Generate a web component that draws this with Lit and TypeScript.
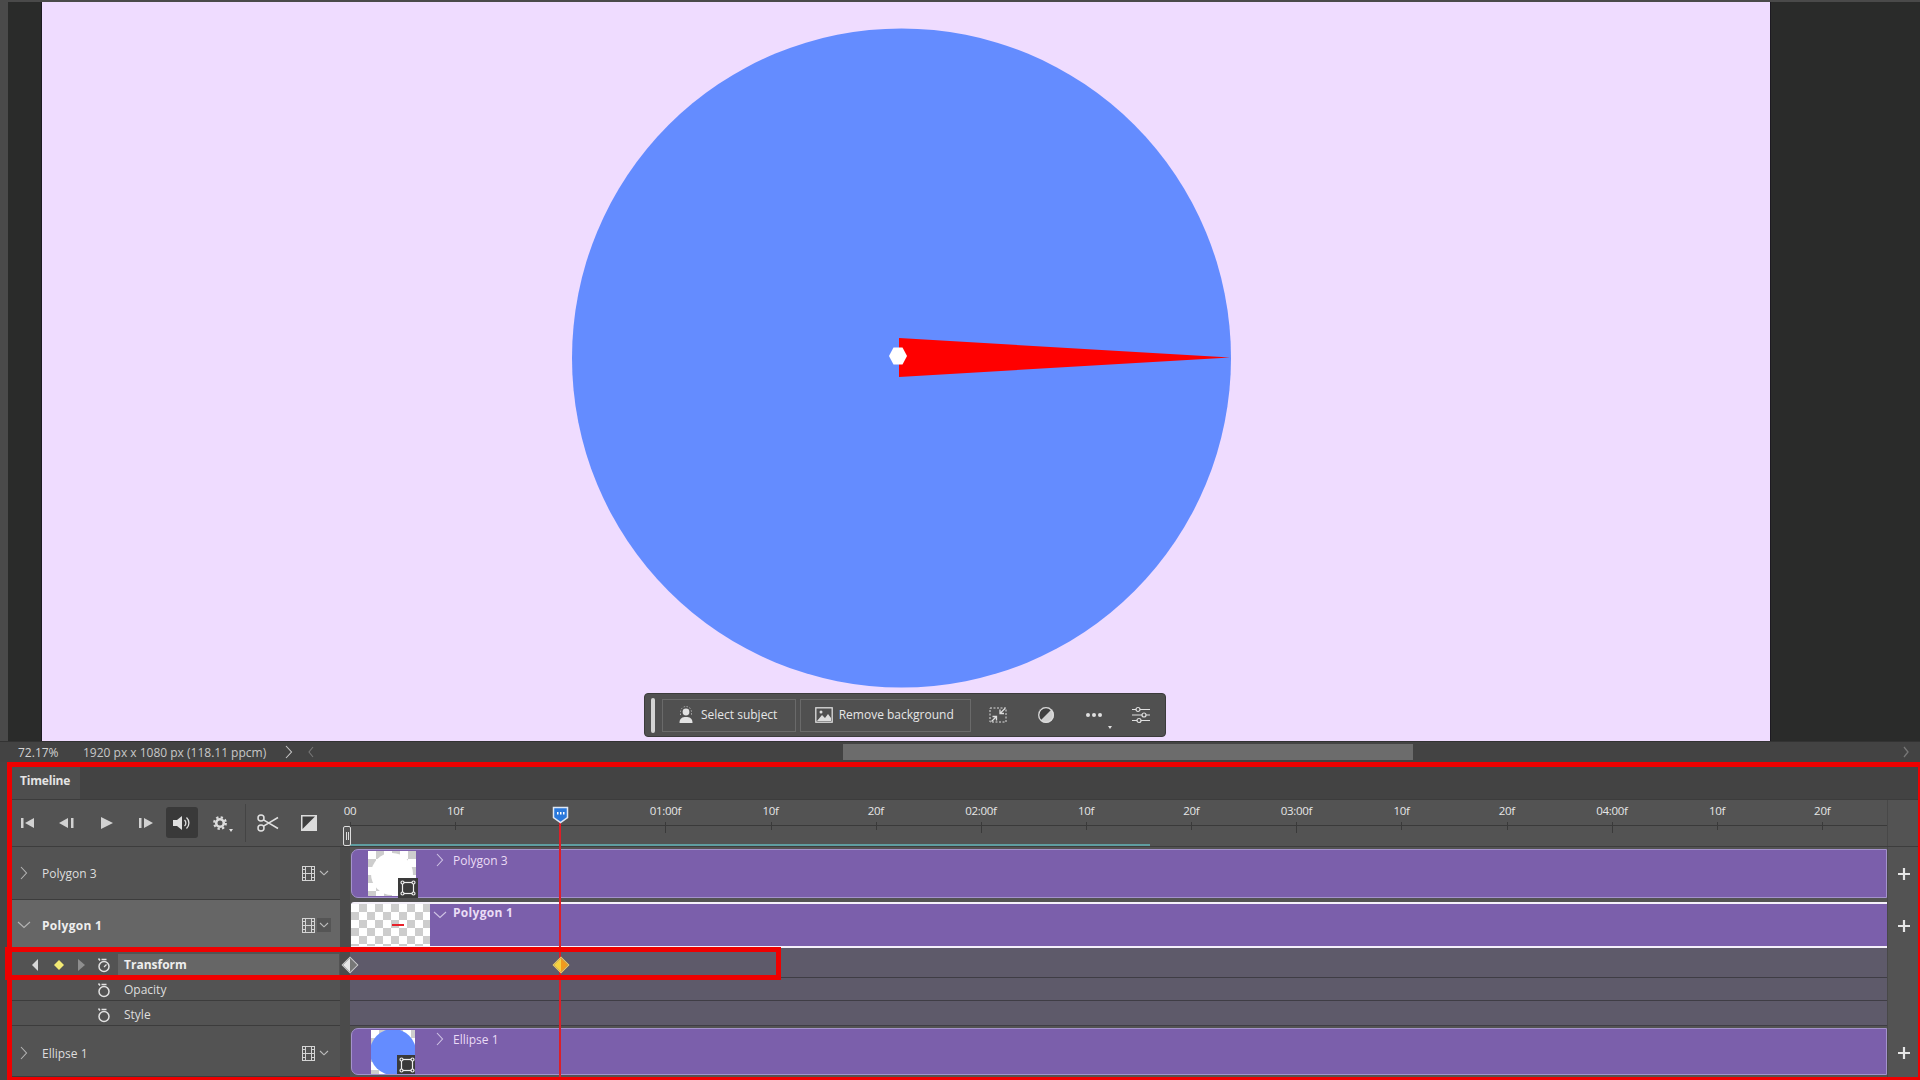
import { LitElement, html, css, svg } from "lit";
import { customElement } from "lit/decorators.js";

const chevR = html`<svg class="chev" width="8" height="14" viewBox="0 0 8 14"><path d="M1 1l5.5 6L1 13" fill="none" stroke="currentColor" stroke-width="1.1"/></svg>`;
const chevD = html`<svg class="chev" width="14" height="8" viewBox="0 0 14 8"><path d="M1 1l6 5.5L13 1" fill="none" stroke="currentColor" stroke-width="1.1"/></svg>`;
const smallD = html`<svg width="10" height="6" viewBox="0 0 10 6"><path d="M1 1l4 3.8L9 1" fill="none" stroke="#bdbdbd" stroke-width="1.1"/></svg>`;
const film = html`<svg width="13" height="15" viewBox="0 0 13 15"><path fill="#d4d4d4" fill-rule="evenodd" d="M0 0h13v15H0zM1 1v2h2V1zm0 3v3h2V4zm0 4v3h2V8zm0 4v2h2v-2zM10 1v2h2V1zm0 3v3h2V4zm0 4v3h2V8zm0 4v2h2v-2zM4 1v6h5V1zm0 7v6h5V8z"/></svg>`;
const badge = html`<svg width="16" height="16" viewBox="0 0 16 16" fill="none" stroke="#eee" stroke-width="1.2"><rect x="2.5" y="2.5" width="11" height="11"/><circle cx="2.5" cy="2.5" r="1.5" fill="#3a3a3a"/><circle cx="13.5" cy="2.5" r="1.5" fill="#3a3a3a"/><circle cx="2.5" cy="13.5" r="1.5" fill="#3a3a3a"/><circle cx="13.5" cy="13.5" r="1.5" fill="#3a3a3a"/></svg>`;
const watch = (hand: boolean) => html`<svg width="14" height="16" viewBox="0 0 14 16" fill="none" stroke="#e2e2e2" stroke-width="1.5"><circle cx="7" cy="9.5" r="5"/><path d="M4.5 2.5h5M1.5 1.5l1.5 2"/>${hand ? svg`<path d="M7 10l2.5-2.5" stroke-width="1.2"/>` : ""}</svg>`;

const tools = [
  html`<svg width="14" height="12" viewBox="0 0 14 12" fill="#d2d2d2"><rect x="0" y="1" width="2.5" height="10"/><path d="M13 1v10L4 6z"/></svg>`,
  html`<svg width="16" height="12" viewBox="0 0 16 12" fill="#d2d2d2"><path d="M9 1v10L0 6z"/><rect x="12" y="1" width="2.5" height="10"/></svg>`,
  html`<svg width="14" height="14" viewBox="0 0 14 14" fill="#d2d2d2"><path d="M1 1v12l12-6z"/></svg>`,
  html`<svg width="16" height="12" viewBox="0 0 16 12" fill="#d2d2d2"><rect x="1" y="1" width="2.5" height="10"/><path d="M6 1v10l9-5z"/></svg>`,
];

const ticks = ["00", "10f", "", "01:00f", "10f", "20f", "02:00f", "10f", "20f", "03:00f", "10f", "20f", "04:00f", "10f", "20f"];

@customElement("app-root")
export class AppRoot extends LitElement {
  static styles = css`
    :host { display: block; width: 1920px; height: 1080px; overflow: hidden; background: #444; font-family: "Open Sans", "Liberation Sans", sans-serif; color: #dcdcdc; font-size: 12px; }
    .stage { height: 741px; display: flex; background: #2a2b2a; border-top: 2px solid #4a4a4a; box-sizing: border-box; }
    .gutter { width: 8px; background: #4a4a4a; }
    .dark { width: 33px; }
    .dark.r { width: auto; flex: 1; }
    .canvas { position: relative; width: 1730px; background: #efdcff; border-left: 1px solid #1d1a22; border-right: 1px solid #1d1a22; box-sizing: border-box; }
    .art { display: block; }
    .ctx { position: absolute; left: 602px; top: 691px; width: 522px; height: 44px; box-sizing: border-box; background: #505050; border: 1px solid #3b3b3b; border-radius: 4px; display: flex; align-items: center; padding-left: 6px; font-size: 12px; color: #e6e6e6; }
    .grip { width: 4px; height: 35px; border-radius: 2px; background: #d4d4d4; margin-right: 7px; }
    .cbtn { height: 33px; box-sizing: border-box; border: 1px solid #6a6a6a; display: flex; align-items: center; gap: 6px; padding-bottom: 1px; }
    .s1 { width: 135px; padding-left: 14px; margin-right: 4px; }
    .s2 { width: 173px; padding-left: 14px; }
    .cic { width: 48px; display: flex; justify-content: center; position: relative; }
    .cic.first { margin-left: 4px; }
    .caret { position: absolute; right: 5px; bottom: -13px; width: 0; height: 0; border: 2.5px solid transparent; border-top: 3px solid #e0e0e0; }
    .status { height: 21px; display: flex; align-items: center; background: #434343; font-size: 12px; color: #c8c8c8; border-top: 1px solid #333; box-sizing: border-box; position: relative; }
    .zoom { width: 62px; padding-left: 18px; box-sizing: border-box; margin-right: 21px; color: #d4d4d4; margin-left: 0; }
    .dim { width: 202px; white-space: nowrap; }
    .sc { width: 23px; display: flex; color: #c8c8c8; }
    .sc.back { color: #777; width: 535px; padding-left: 0; }
    .thumbbar { width: 570px; height: 16px; background: #6c6c6c; }
    .fill { flex: 1; }
    .sc.end { color: #777; width: 17px; }
    .panel { height: 318px; margin-left: 7px; box-sizing: border-box; border: solid #ee0000; border-width: 5px 2px 3px 5px; background: #535353; position: relative; }
    .tabs { height: 33px; background: #434343; display: flex; border-bottom: 1px solid #3c3c3c; box-sizing: border-box; }
    .tab { width: 68px; background: #4e4e4e; padding-left: 8px; box-sizing: border-box; font-weight: 700; font-size: 12px; line-height: 27px; color: #e4e4e4; letter-spacing: -0.2px; }
    .grid { display: grid; grid-template-columns: 328px 10px 1537px 31px; }
    .top { height: 47px; border-bottom: 1px solid #3d3d3d; box-sizing: border-box; }
    .ctl { display: flex; align-items: center; padding-bottom: 1px; box-sizing: border-box; }
    .tb { width: 39.5px; display: flex; justify-content: center; }
    .tb:first-child { margin-left: -4px; }
    .tb.on { width: 32px; height: 31px; background: #393939; border-radius: 3px; align-items: center; margin: 0 7px 0 0; }
    .gear { width: 32px; position: relative; display: flex; justify-content: center; margin-left: -1px; }
    .gear::after { content: ""; position: absolute; right: 3px; bottom: -4px; border: 2.5px solid transparent; border-top: 3px solid #e0e0e0; }
    .sep { width: 1px; height: 38px; background: #444; margin: 0 11px 0 9px; }
    .sci { margin-right: 22px; display: flex; }
    .gap { background: #4b4b4b; }
    .ruler { display: flex; flex-direction: column; position: relative; grid-column: 2 / span 2; }
    .ticks { display: flex; margin-left: -42.6px; height: 25px; }
    .tick { width: 105.17px; flex: none; position: relative; text-align: center; font-size: 11.5px; line-height: 21px; color: #e6e6e6; letter-spacing: -0.3px; white-space: nowrap; }
    .tick::after { content: ""; position: absolute; left: 52.5px; top: 22px; width: 1px; height: 8px; background: #3a3a3a; }
    .tick.major::after { height: 11px; }
    .rline { height: 1px; background: #3a3a3a; margin-left: 10px; }
    .warea { margin: 18px 0 0 10px; width: 800px; height: 2px; background: #5f9da0; }
    .handle { position: absolute; left: 3px; top: 26px; width: 8px; height: 20px; box-sizing: border-box; border: 1px solid #ddd; border-radius: 2px; background: #555; display: flex; justify-content: center; gap: 1px; padding: 5px 0; }
    .handle i { width: 1px; background: #ddd; }
    .end-cell { border-left: 1px solid #484848; }
    .left { display: flex; align-items: center; border-bottom: 1px solid #3c3c3c; box-sizing: border-box; position: relative; }
    .left.sel { background: #666; padding-top: 3px; }
    .left.low { padding-top: 4px; }
    .left .chev { color: #b4b4b4; }
    .twist { width: 23px; margin-right: 7px; display: flex; justify-content: center; flex: none; }
    .lname { flex: 1; font-size: 12px; color: #dedede; }
    .lname.b { font-weight: 700; color: #eee; letter-spacing: 0.3px; }
    .ltools { display: flex; align-items: center; margin-right: 9px; gap: 2px; }
    .dd { width: 14px; height: 14px; display: flex; align-items: center; justify-content: center; }
    .sel .dd { background: #555; }
    .h53 { height: 53px; } .h48 { height: 48px; } .h30 { height: 30px; } .h23 { height: 23px; } .h25 { height: 25px; } .h51 { height: 51px; }
    .track { box-sizing: border-box; background: #7b5fab; border: 1px solid #a492cc; border-radius: 7px 0 0 7px; display: flex; align-items: flex-start; margin: 2px 0 2px 1px; color: #eadcf5; }
    .track.sel { border: solid #f4f0fa; border-width: 2px 0; border-radius: 3px 0 0 0; margin: 2px 0 0 1px; }
    .thumb { position: relative; flex: none; background: conic-gradient(#cdcdcd 25%, #fff 0 50%, #cdcdcd 0 75%, #fff 0) 0 0 / 16px 16px; display: flex; align-items: center; justify-content: center; }
    .t-p3 { width: 48px; height: 45px; margin: 1px 0 0 16px; }
    .t-p1 { width: 79px; height: 42px; margin-left: 0; }
    .t-el { width: 44px; height: 44px; margin: 1px 0 0 19px; overflow: hidden; justify-content: flex-start; }
    .white { width: 42px; height: 42px; border-radius: 50%; background: #fff; }
    .blue { width: 46px; height: 46px; border-radius: 50%; background: #648cff; flex: none; margin-left: -1px; }
    .dash { width: 12px; height: 2px; background: #e8202a; margin-left: 14px; }
    .badge { position: absolute; right: -2px; bottom: -2px; width: 20px; height: 20px; background: #3a3a3a; display: flex; align-items: center; justify-content: center; }
    .t-el .badge { right: -2px; bottom: -1px; }
    .tchev { display: flex; margin: 3px 0 0 0; color: #cfc3e4; }
    .c-p3 { margin-left: 20px; } .c-p1 { margin: 7px 0 0 3px; } .c-el { margin-left: 21px; }
    .tlabel { font-size: 12px; line-height: 20px; margin-left: 9px; margin-top: 1px; white-space: nowrap; }
    .tlabel.b { font-weight: 700; margin-top: -1px; margin-left: 6px; letter-spacing: 0.3px; }
    .plus { display: flex; align-items: center; justify-content: center; border-left: 1px solid #484848; padding-left: 1px; }
    .plus.p3 { padding-top: 3px; } .plus.p2 { padding-top: 2px; }
    .pright { border-left: 1px solid #484848; }
    .prop { background: #5e5a6a; border-bottom: 1px solid #3f3d45; box-sizing: border-box; }
    .pleft { display: flex; align-items: center; border-bottom: 1px solid #3c3c3c; box-sizing: border-box; font-size: 12px; color: #dedede; padding-top: 2px; }
    .pleft.low { padding-top: 4px; }
    .keys { display: flex; align-items: center; width: 112px; flex: none; padding-left: 12px; box-sizing: border-box; }
    .kbtn { width: 23px; display: flex; justify-content: center; }
    .kwatch { width: 21px; margin-left: 0; display: flex; justify-content: center; }
    .plabel { flex: 1; padding-left: 6px; height: 22px; line-height: 22px; margin-right: 1px; margin-left: -6px; }
    .pleft.pt { padding-top: 5px; }
    .pt .plabel { background: #666; font-weight: 700; color: #eee; }
    .kf { position: absolute; width: 10px; height: 10px; transform: rotate(45deg); left: 332px; top: 192px; }
    .kf.a { background: linear-gradient(45deg, #e6e6e6 50%, #777 50%); border: 1px solid #ccc; }
    .kf.b { left: 543px; background: linear-gradient(45deg, #f6d240 50%, #f09a1e 50%); border: 1px solid #f3d264; }
    .playhead { position: absolute; left: 547px; top: 52px; bottom: 0; width: 2px; background: #dc1f28; }
    .head { position: absolute; left: 540px; top: 38px; display: flex; }
    .note { position: absolute; left: -7px; top: 180px; width: 776px; height: 33px; box-sizing: border-box; border: 5px solid #ee0000; pointer-events: none; }
  `;

  render() {
    return html`
      <div class="stage">
        <div class="gutter"></div>
        <div class="dark"></div>
        <div class="canvas">
          <svg class="art" width="1728" height="739" viewBox="0 0 1728 739">
            <circle cx="859.500" cy="356" r="329.500" fill="#648cff"/>
            <path d="M857 336L1188 355.5L857 375z" fill="#ff0000"/>
            <path d="M847 354L851.5 345.5L860.5 345.5L865 354L860.5 362.5L851.500 362.500z" fill="#fff"/>
          </svg>
          <div class="ctx">
            <div class="grip"></div>
            <div class="cbtn s1">
              <svg width="18" height="18" viewBox="0 0 18 18"><circle cx="9" cy="6" r="3.4" fill="#e2e2e2"/><path d="M2.500 17c0-5 3-6 6.500-6s6.500 1 6.500 6z" fill="#e2e2e2"/><path d="M3.500 9V6a5.500 5.500 0 0 1 11 0v3" fill="none" stroke="#aaa" stroke-dasharray="1.500 1.500"/></svg>
              <span>Select subject</span>
            </div>
            <div class="cbtn s2">
              <svg width="18" height="16" viewBox="0 0 18 16"><rect x=".8" y=".8" width="16.400" height="14.400" fill="none" stroke="#ddd" stroke-width="1.300"/><path d="M2 14l5-6 3 3 3-4 3 4v3z" fill="#ddd"/><circle cx="6" cy="5" r="1.500" fill="#ddd"/></svg>
              <span>Remove background</span>
            </div>
            <div class="cic first"><svg width="19" height="18" viewBox="0 0 19 18" fill="none" stroke="#ddd"><rect x="1" y="2" width="16" height="14" stroke-dasharray="2 1.500"/><path d="M16 2.500L11 7.500M11 3.500V7.500H15M2.500 15.500L7.500 10.500M3.500 10.500H7.500V14.500" stroke-width="1.300"/></svg></div>
            <div class="cic"><svg width="18" height="18" viewBox="0 0 18 18"><circle cx="9" cy="9" r="8" fill="#cfcfcf"/><path d="M3.300 14.700A8 8 0 0 1 14.700 3.300z" fill="#3f3f3f"/><circle cx="9" cy="9" r="7.300" fill="none" stroke="#dcdcdc" stroke-width="1.300"/></svg></div>
            <div class="cic"><svg width="18" height="6" viewBox="0 0 18 6" fill="#e0e0e0"><circle cx="3" cy="3" r="2"/><circle cx="9" cy="3" r="2"/><circle cx="15" cy="3" r="2"/></svg><span class="caret"></span></div>
            <div class="cic"><svg width="18" height="18" viewBox="0 0 18 18" fill="#505050" stroke="#e0e0e0" stroke-width="1.200"><path d="M0 3.500h18M0 9h18M0 14.500h18"/><circle cx="6" cy="3.500" r="2"/><circle cx="12" cy="9" r="2"/><circle cx="7" cy="14.500" r="2"/></svg></div>
          </div>
        </div>
        <div class="dark r"></div>
      </div>
      <div class="status">
        <div class="zoom">72.17%</div>
        <div class="dim">1920 px x 1080 px (118.11 ppcm)</div>
        <div class="sc">${chevR}</div>
        <div class="sc back"><svg width="6" height="12" viewBox="0 0 6 12"><path d="M5 1L1 6l4 5" fill="none" stroke="currentColor" stroke-width="1.100"/></svg></div>
        <div class="thumbbar"></div>
        <div class="fill"></div>
        <div class="sc end"><svg width="6" height="12" viewBox="0 0 6 12"><path d="M1 1l4 5-4 5" fill="none" stroke="currentColor" stroke-width="1.300"/></svg></div>
      </div>
      <div class="panel">
        <div class="tabs"><div class="tab">Timeline</div></div>
        <div class="grid top">
          <div class="ctl">
            ${tools.map((t) => html`<div class="tb">${t}</div>`)}
            <div class="tb on"><svg width="20" height="16" viewBox="0 0 20 16"><path d="M1 5h4l5-4v14l-5-4H1z" fill="#e0e0e0"/><path d="M12.500 5a4 4 0 0 1 0 6M14.500 2.500a7.500 7.500 0 0 1 0 11" fill="none" stroke="#e0e0e0" stroke-width="1.300"/></svg></div>
            <div class="gear"><svg width="14" height="14" viewBox="0 0 14 14"><circle cx="7" cy="7" r="3.800" fill="none" stroke="#dcdcdc" stroke-width="2.600"/><circle cx="7" cy="7" r="5.800" fill="none" stroke="#dcdcdc" stroke-width="2.200" stroke-dasharray="2.300 2.250"/></svg></div>
            <div class="sep"></div>
            <div class="sci"><svg width="22" height="18" viewBox="0 0 22 18" fill="none" stroke="#e0e0e0" stroke-width="1.500"><circle cx="4" cy="4" r="3"/><circle cx="4" cy="14" r="3"/><path d="M6.500 5.800L21 14.500M6.500 12.200L21 3.500"/></svg></div>
            <svg width="16" height="16" viewBox="0 0 16 16"><rect width="16" height="16" fill="#dcdcdc"/><path d="M1.500 1.500h12.500L1.500 14z" fill="#3e3e3e"/></svg>
          </div>
          <div class="ruler">
            <div class="ticks">
              ${ticks.map((t) => html`<div class="tick ${t.includes(":") || t === "00" ? "major" : ""}">${t}</div>`)}
            </div>
            <div class="rline"></div>
            <div class="warea"></div>
            <div class="handle"><i></i><i></i></div>
          </div>
          <div class="end-cell"></div>
        </div>
        <div class="grid">
          <div class="left h53">
            <div class="twist">${chevR}</div>
            <div class="lname">Polygon 3</div>
            <div class="ltools">${film}<div class="dd">${smallD}</div></div>
          </div>
          <div class="gap"></div>
          <div class="track">
            <div class="thumb t-p3"><div class="white"></div><div class="badge">${badge}</div></div>
            <div class="tchev c-p3">${chevR}</div>
            <div class="tlabel">Polygon 3</div>
          </div>
          <div class="plus">${this.plus()}</div>

          <div class="left sel h48">
            <div class="twist">${chevD}</div>
            <div class="lname b">Polygon 1</div>
            <div class="ltools">${film}<div class="dd">${smallD}</div></div>
          </div>
          <div class="gap"></div>
          <div class="track sel">
            <div class="thumb t-p1"><div class="dash"></div></div>
            <div class="tchev c-p1">${chevD}</div>
            <div class="tlabel b">Polygon 1</div>
          </div>
          <div class="plus p3">${this.plus()}</div>

          <div class="pleft pt h30">
            <div class="keys">
              <div class="kbtn"><svg width="7" height="12" viewBox="0 0 7 12"><path d="M6 0v12L0 6z" fill="#d8d8d8"/></svg></div>
              <div class="kbtn"><svg width="12" height="12" viewBox="0 0 12 12"><path d="M6 1l5 5-5 5-5-5z" fill="#f3ea74"/></svg></div>
              <div class="kbtn"><svg width="7" height="12" viewBox="0 0 7 12"><path d="M0 0v12l7-6z" fill="#8e8e8e"/></svg></div>
              <div class="kwatch">${watch(true)}</div>
            </div>
            <div class="plabel">Transform</div>
          </div>
          <div class="gap"></div>
          <div class="prop"></div>
          <div class="pright"></div>

          <div class="pleft h23">
            <div class="keys"><div class="kbtn"></div><div class="kbtn"></div><div class="kbtn"></div><div class="kwatch">${watch(false)}</div></div>
            <div class="plabel">Opacity</div>
          </div>
          <div class="gap"></div>
          <div class="prop"></div>
          <div class="pright"></div>

          <div class="pleft low h25">
            <div class="keys"><div class="kbtn"></div><div class="kbtn"></div><div class="kbtn"></div><div class="kwatch">${watch(false)}</div></div>
            <div class="plabel">Style</div>
          </div>
          <div class="gap"></div>
          <div class="prop"></div>
          <div class="pright"></div>

          <div class="left low h51">
            <div class="twist">${chevR}</div>
            <div class="lname">Ellipse 1</div>
            <div class="ltools">${film}<div class="dd">${smallD}</div></div>
          </div>
          <div class="gap"></div>
          <div class="track">
            <div class="thumb t-el"><div class="blue"></div><div class="badge">${badge}</div></div>
            <div class="tchev c-el">${chevR}</div>
            <div class="tlabel">Ellipse 1</div>
          </div>
          <div class="plus p2">${this.plus()}</div>
        </div>

        <div class="playhead"></div>
        <div class="head"><svg width="18" height="19" viewBox="0 0 18 19"><path d="M1.500 2.500h14v10l-7 5-7-5z" fill="#2a79dc" stroke="#dfe8f4" stroke-width="1.500"/><g fill="#fff"><rect x="5" y="7" width="1.500" height="2.500"/><rect x="8" y="7" width="1.500" height="2.500"/><rect x="11" y="7" width="1.500" height="2.500"/></g></svg></div>
        <div class="note"></div>
        <div class="kf a"></div>
        <div class="kf b"></div>
      </div>
    `;
  }

  plus() {
    return html`<svg width="14" height="14" viewBox="0 0 14 14"><path d="M7 1v12M1 7h12" stroke="#e6e6e6" stroke-width="2.200"/></svg>`;
  }
}
